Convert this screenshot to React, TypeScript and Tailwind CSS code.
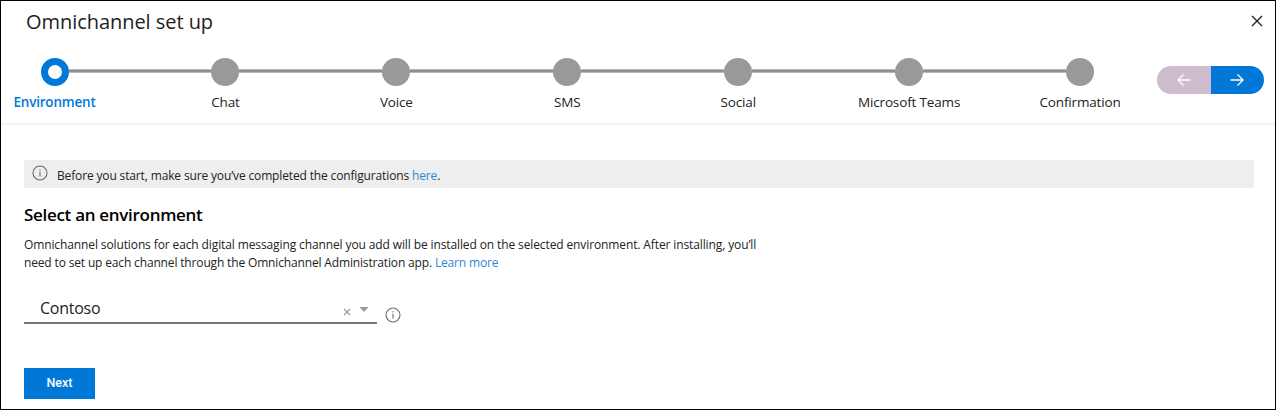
import type { ReactNode } from "react";

const steps = ["Environment", "Chat", "Voice", "SMS", "Social", "Microsoft Teams", "Confirmation"];

function InfoIcon({ className = "" }: { className?: string }) {
  return (
    <svg width="16" height="16" viewBox="0 0 16 16" fill="none" stroke="#6a6a6a" strokeWidth="1.1" className={"shrink-0 " + className}>
      <circle cx="8" cy="8" r="7" />
      <path d="M8 6.8v4.8M8 4.3v1.3" />
    </svg>
  );
}

function Arrow({ left }: { left?: boolean }) {
  return (
    <svg width="14" height="14" viewBox="0 0 14 14" fill="none" stroke="#fff" strokeWidth="1.4" className={left ? "-ml-px rotate-180" : "-ml-px"}>
      <path d="M0.5 7H13M7.5 1.5L13 7L7.5 12.5" />
    </svg>
  );
}

function Link({ children }: { children: ReactNode }) {
  return <a href="#" className="text-[#2b88d8]">{children}</a>;
}

export default function App() {
  return (
    <div className="flex h-[410px] w-[1276px] flex-col border border-black bg-white font-['Open_Sans','Noto_Sans',sans-serif] text-[#222]">
      <header className="flex h-[124px] shrink-0 flex-col border-b-2 border-[#f3f3f3]">
        <div className="flex h-[56.5px] items-start justify-between pl-[25px] pr-3">
          <h1 className="mt-[7px] text-[20px] leading-7 tracking-[-0.05px]">Omnichannel set up</h1>
          <svg width="12" height="12" viewBox="0 0 12 12" stroke="#222" strokeWidth="1.4" className="mt-[13.5px]">
            <path d="M1 1l10 10M11 1L1 11" />
          </svg>
        </div>
        <div className="flex items-start">
          <div className="ml-[39.5px] flex w-[1053.5px]">
            {steps.map((s, i) => (
              <div key={s} className={i ? "flex flex-1" : "flex"}>
                {i > 0 && <div className="mt-[11.5px] h-1 flex-1 border-y border-[#b8b8b8] bg-[#8f8f8f]" />}
                <div className="flex w-7 flex-col items-center">
                  <div className={i ? "size-7 rounded-full bg-[#999]" : "size-7 rounded-full border-[7px] border-[#0078d7]"} />
                  <span
                    className={
                      i
                        ? "mt-1.5 whitespace-nowrap text-[13.5px] leading-5 tracking-[-0.15px]"
                        : "mt-1.5 whitespace-nowrap text-[13.5px] font-semibold leading-5 tracking-[-0.2px] text-[#0078d7]"
                    }
                  >
                    {s}
                  </span>
                </div>
              </div>
            ))}
          </div>
          <div className="ml-[63px] mt-[8.5px] flex h-7 w-[107px] overflow-hidden rounded-full">
            <button className="flex w-[54px] items-center justify-center bg-[#cdbccb]"><Arrow left /></button>
            <button className="flex flex-1 items-center justify-center bg-[#0078d7]"><Arrow /></button>
          </div>
        </div>
      </header>
      <main className="flex flex-col items-start pl-[23px] pr-[21px] pt-[35px] text-[12px]">
        <div className="flex h-7 w-full items-center bg-[#eee] pl-2">
          <InfoIcon className="-mt-0.5" />
          <p className="ml-[9px] mt-1 tracking-[-0.145px]">
            Before you start, make sure you’ve completed the configurations <Link>here</Link>.
          </p>
        </div>
        <h2 className="mt-[15px] text-[17px] font-semibold leading-6 tracking-[-0.3px] text-black">Select an environment</h2>
        <div className="mt-[9px] whitespace-nowrap leading-[17.5px]">
          <p className="tracking-[-0.115px]">
            Omnichannel solutions for each digital messaging channel you add will be installed on the selected environment. After installing, you’ll
          </p>
          <p className="tracking-[-0.155px]">
            need to set up each channel through the Omnichannel Administration app. <Link>Learn more</Link>
          </p>
        </div>
        <div className="mt-[22px] flex h-[31px] items-end">
          <div className="flex h-[31px] w-[353px] border-b-2 border-[#777] pl-4">
            <span className="flex-1 text-[16px] leading-[31px] tracking-[-0.25px]">Contoso</span>
            <svg width="8" height="8" viewBox="0 0 8 8" stroke="#999" strokeWidth="1.2" className="mr-2 mt-[15px]">
              <path d="M1 1l6 6M7 1L1 7" />
            </svg>
            <svg width="10" height="5" viewBox="0 0 10 5" fill="#999" className="mr-2 mt-[14px]">
              <path d="M0.5 0h9L5 5z" />
            </svg>
          </div>
          <InfoIcon className="mb-px ml-2" />
        </div>
        <button className="mt-11 h-[31px] w-[71px] bg-[#0078d7] pb-px font-['Roboto',sans-serif] text-[12.5px] font-medium text-white">
          Next
        </button>
      </main>
    </div>
  );
}
